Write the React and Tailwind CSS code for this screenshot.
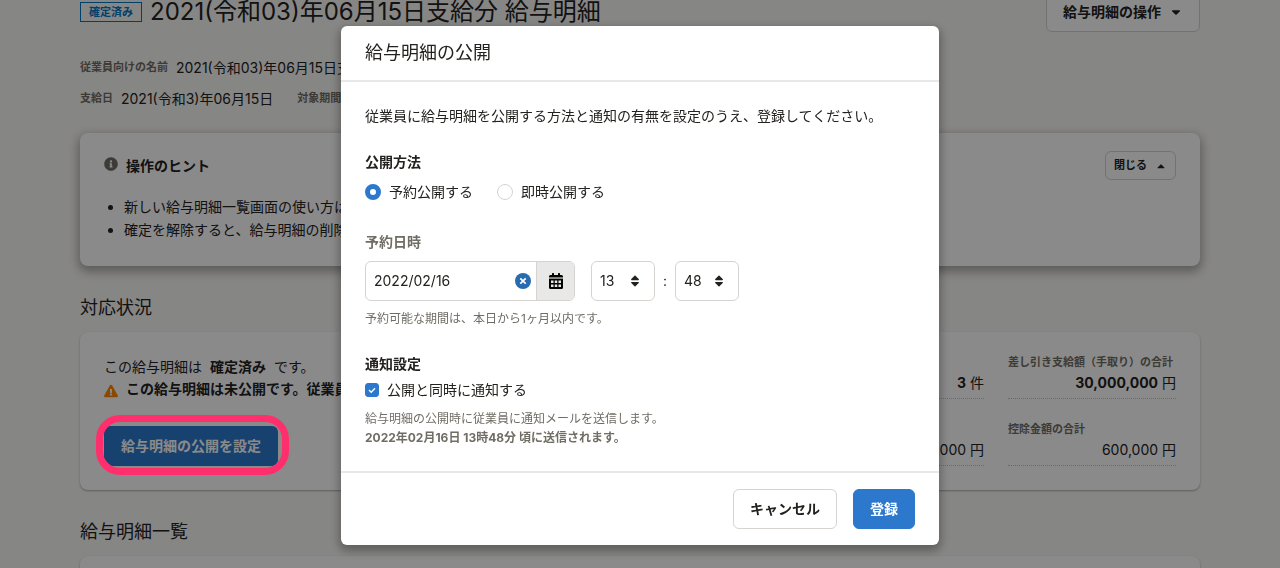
import React, { useState } from "react";
import {
  FaCaretDown,
  FaCaretUp,
  FaExclamationTriangle,
  FaInfoCircle,
  FaSort,
} from "react-icons/fa";

function Fact({ label, children, className = "" }) {
  return (
    <div className={className}>
      <dt className="text-[11px] leading-3 font-bold whitespace-nowrap text-[#706d65]">{label}</dt>
      <dd className="mt-1 border-b border-dotted border-[#c4c2be] pb-1 text-right text-sm leading-[22px]">
        {children}
      </dd>
    </div>
  );
}

function Meta({ label, children }) {
  return (
    <div className="flex items-center gap-2 whitespace-nowrap">
      <dt className="text-[11px] leading-[23px] font-bold text-[#706d65]">{label}</dt>
      <dd className="text-sm leading-[23px]">{children}</dd>
    </div>
  );
}

function ClearIcon() {
  return (
    <svg viewBox="0 0 16 16" className="size-4" aria-hidden="true">
      <circle cx="8" cy="8" r="8" fill="#276cb0" />
      <path d="M5.300 5.300l5.400 5.400M10.700 5.300l-5.400 5.400" stroke="white" strokeWidth="1.700" />
    </svg>
  );
}

function CalendarIcon() {
  return (
    <svg viewBox="0 0 14 16" className="h-4 w-[14px]" aria-hidden="true">
      <path
        fillRule="evenodd"
        fill="#030302"
        d="M3 .4a.4.4 0 0 1 .4-.4h1.200a.4.4 0 0 1 .4.4V2h4V.4a.4.4 0 0 1 .4-.4h1.200a.4.4 0 0 1 .4.4V2h1.500A1.500 1.500 0 0 1 14 3.500V4.500H0V3.500A1.500 1.500 0 0 1 1.500 2H3zM0 6h14v8.500a1.500 1.500 0 0 1-1.500 1.500h-11A1.500 1.500 0 0 1 0 14.500zM2 7.500V10h2.500V7.500zM5.750 7.500V10h2.500V7.500zM9.500 7.500V10H12V7.500zM2 11.500V14h2.500v-2.500zM5.750 11.500V14h2.500v-2.500zM9.500 11.500V14H12v-2.500z"
      />
      <path d="M0 4.500h14V6H0z" fill="#8a8a89" />
    </svg>
  );
}

function TimeSelect({ label, value, options }) {
  return (
    <div className="relative w-16">
      <select
        aria-label={label}
        defaultValue={value}
        className="h-10 w-full appearance-none rounded-md border border-[#d6d3d0] bg-white px-2 text-sm"
      >
        {options.map((o) => (
          <option key={o}>{o}</option>
        ))}
      </select>
      <FaSort className="pointer-events-none absolute top-[13px] right-[13px] size-[14px]" aria-hidden="true" />
    </div>
  );
}

function SectionTitle({ children }) {
  return <h2 className="mt-7 mb-[10px] text-lg leading-7">{children}</h2>;
}

function Payslips() {
  return (
    <main className="mx-auto w-full max-w-[1168px] px-6">
      <header className="-mt-2 flex h-10 items-center gap-2">
        <span className="border border-[#0077c7] px-2 text-[11px] leading-[18px] font-bold whitespace-nowrap text-[#0077c7]">
          確定済み
        </span>
        <h1 className="text-2xl leading-8 whitespace-nowrap">2021(令和03)年06月15日支給分 給与明細</h1>
        <button
          type="button"
          className="ml-auto flex h-10 items-center gap-2 rounded-md border border-[#d6d3d0] bg-white px-4 text-sm font-bold whitespace-nowrap"
        >
          給与明細の操作
          <FaCaretDown className="size-[14px]" aria-hidden="true" />
        </button>
      </header>

      <dl className="mt-6 flex flex-col gap-2">
        <Meta label="従業員向けの名前">2021(令和03)年06月15日支給分</Meta>
        <div className="flex gap-6">
          <Meta label="支給日">2021(令和3)年06月15日</Meta>
          <Meta label="対象期間">2021(令和3)年05月01日〜2021(令和3)年05月31日</Meta>
        </div>
      </dl>

      <section className="mt-[23px] rounded-lg bg-white px-6 pt-[18px] pb-[25px] shadow-[0_4px_10px_2px_rgba(3,3,2,0.3)]">
        <div className="flex items-center justify-between">
          <h2 className="flex items-center gap-2 text-sm font-bold">
            <FaInfoCircle className="mb-1 size-[14px] text-[#706d65]" aria-hidden="true" />
            操作のヒント
          </h2>
          <button
            type="button"
            className="flex h-[29px] items-center gap-2 rounded-md border border-[#d6d3d0] px-2 text-[11px] font-bold"
          >
            閉じる
            <FaCaretUp className="size-3" aria-hidden="true" />
          </button>
        </div>
        <ul className="mt-[15px] list-disc pl-5 text-sm leading-[23px]">
          <li>新しい給与明細一覧画面の使い方はヘルプページをご覧ください。</li>
          <li>確定を解除すると、給与明細の削除や再計算ができます。</li>
        </ul>
      </section>

      <SectionTitle>対応状況</SectionTitle>
      <section className="flex justify-between gap-6 rounded-lg bg-white p-6 shadow-[0_1px_2px_rgba(3,3,2,0.3)]">
        <div className="text-sm leading-[22px]">
          <p>
            この給与明細は<strong className="mx-2">確定済み</strong>です。
          </p>
          <p className="flex items-center gap-2 font-bold">
            <FaExclamationTriangle className="mt-1 size-[14px] text-[#ff8800]" aria-hidden="true" />
            この給与明細は未公開です。従業員は閲覧できません。
          </p>
          <div className="relative mt-[26px] w-fit">
            <button
              type="button"
              className="block h-10 rounded-md bg-[#2b78cc] px-[17px] text-sm font-bold text-white"
            >
              給与明細の公開を設定
            </button>
            <span className="pointer-events-none absolute -top-[11px] -right-[11px] -bottom-[9px] -left-2 z-20 rounded-3xl border-[7px] border-[#ff2f6e]" />
          </div>
        </div>
        <dl className="grid grid-cols-[168px_168px] content-start gap-6">
          <Fact label="対象人数">
            <strong>3</strong> 件
          </Fact>
          <Fact label="差し引き支給額（手取り）の合計">
            <strong>30,000,000</strong> 円
          </Fact>
          <Fact label="支給金額の合計">30,600,000 円</Fact>
          <Fact label="控除金額の合計">600,000 円</Fact>
        </dl>
      </section>

      <SectionTitle>給与明細一覧</SectionTitle>
      <section className="h-24 rounded-lg bg-white shadow-[0_1px_2px_rgba(3,3,2,0.3)]" />
    </main>
  );
}

function PublishDialog() {
  const [date, setDate] = useState("2022/02/16");
  const radio =
    "size-4 appearance-none rounded-full border border-[#d6d3d0] bg-white checked:border-[5px] checked:border-[#2b78cc]";
  return (
    <div className="fixed inset-0 z-10 flex items-start justify-center bg-black/46 pt-[26px]">
      <form
        role="dialog"
        aria-modal="true"
        aria-labelledby="dialog-title"
        onSubmit={(e) => e.preventDefault()}
        className="w-full max-w-[598px] rounded-md bg-white shadow-[0_4px_10px_2px_rgba(3,3,2,0.3)]"
      >
        <h2 id="dialog-title" className="border-b-2 border-[#e8e8e8] px-6 text-lg leading-[54px]">
          給与明細の公開
        </h2>
        <div className="px-6 pt-[23px] pb-6 text-sm leading-[22px]">
          <p>従業員に給与明細を公開する方法と通知の有無を設定のうえ、登録してください。</p>

          <fieldset className="mt-6">
            <legend className="mb-2 font-bold">公開方法</legend>
            <div className="flex gap-6">
              <label className="flex items-center gap-2">
                <input type="radio" name="method" defaultChecked className={radio} />
                予約公開する
              </label>
              <label className="flex items-center gap-2">
                <input type="radio" name="method" className={radio} />
                即時公開する
              </label>
            </div>
          </fieldset>

          <fieldset className="mt-7">
            <legend className="mb-2 font-bold text-[#706d65]">予約日時</legend>
            <div className="flex items-center">
              <div className="mr-4 flex h-10 w-[210px] overflow-hidden rounded-md border border-[#d6d3d0]">
                <input
                  type="text"
                  aria-label="予約日"
                  value={date}
                  onChange={(e) => setDate(e.target.value)}
                  className="min-w-0 flex-1 pl-2"
                />
                <button type="button" aria-label="日付を消去" onClick={() => setDate("")} className="px-[5px]">
                  <ClearIcon />
                </button>
                <button
                  type="button"
                  aria-label="カレンダーを開く"
                  className="flex w-[38px] items-center justify-center border-l border-[#d6d3d0] bg-[#e8e8e8]"
                >
                  <CalendarIcon />
                </button>
              </div>
              <TimeSelect label="時" value="13" options={["12", "13", "14"]} />
              <span className="w-5 text-center">:</span>
              <TimeSelect label="分" value="48" options={["47", "48", "49"]} />
            </div>
            <p className="mt-2 text-xs leading-5 text-[#706d65]">予約可能な期間は、本日から1ヶ月以内です。</p>
          </fieldset>

          <fieldset className="mt-6">
            <legend className="mb-1 font-bold">通知設定</legend>
            <label className="flex w-fit items-center gap-2">
              <span className="grid">
                <input
                  type="checkbox"
                  defaultChecked
                  className="peer col-start-1 row-start-1 size-[14px] appearance-none rounded-[3px] border border-[#d6d3d0] checked:border-[#2b78cc] checked:bg-[#2b78cc]"
                />
                <svg
                  viewBox="0 0 14 14"
                  className="pointer-events-none invisible col-start-1 row-start-1 size-[14px] peer-checked:visible"
                  aria-hidden="true"
                >
                  <path d="M4 7l2.200 2.200L10 5.300" fill="none" stroke="white" strokeWidth="1.400" />
                </svg>
              </span>
              公開と同時に通知する
            </label>
            <p className="mt-2 text-xs leading-[19px] text-[#706d65]">
              給与明細の公開時に従業員に通知メールを送信します。
              <strong className="block">2022年02月16日 13時48分 頃に送信されます。</strong>
            </p>
          </fieldset>
        </div>
        <div className="flex justify-end gap-4 border-t-2 border-[#e8e8e8] px-6 py-4 text-sm font-bold">
          <button type="button" className="h-10 rounded-md border border-[#d6d3d0] bg-white px-4">
            キャンセル
          </button>
          <button type="submit" className="h-10 rounded-md border border-[#2b78cc] bg-[#2b78cc] px-4 text-white">
            登録
          </button>
        </div>
      </form>
    </div>
  );
}

export default function App() {
  return (
    <div className="flow-root h-screen overflow-hidden bg-[#f8f7f4] font-['Inter','Noto_Sans_CJK_JP',sans-serif] text-[#23221e]">
      <Payslips />
      <PublishDialog />
    </div>
  );
}
